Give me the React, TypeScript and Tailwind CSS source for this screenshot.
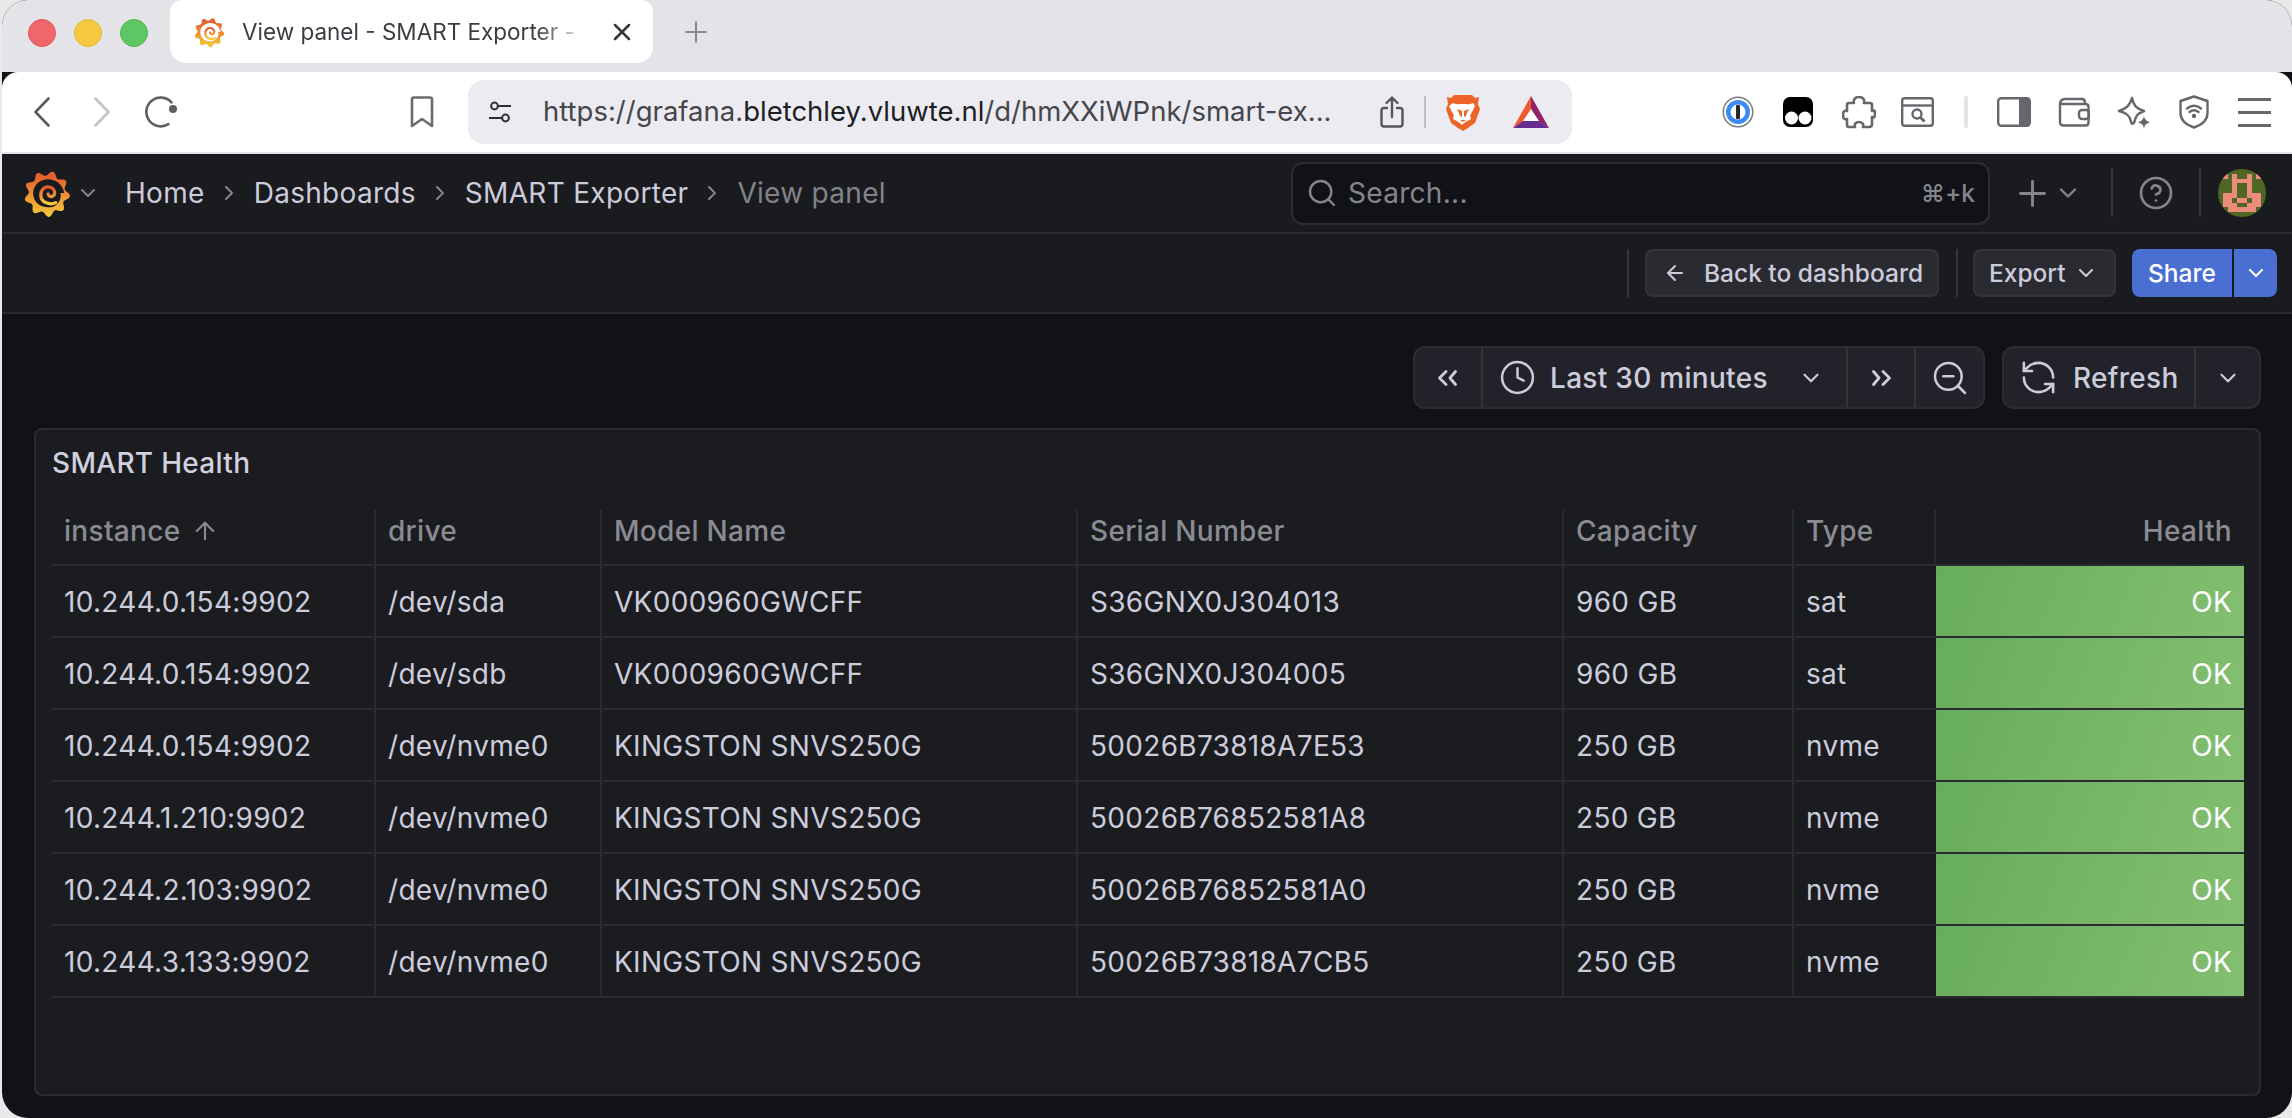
import { ArrowLeft, ArrowUp, ChevronDown, ChevronRight, CircleHelp, Clock, Plus, RefreshCcw, Search, X, ZoomOut } from "lucide-react";

const rows = [
  ["10.244.0.154:9902", "/dev/sda", "VK000960GWCFF", "S36GNX0J304013", "960 GB", "sat"],
  ["10.244.0.154:9902", "/dev/sdb", "VK000960GWCFF", "S36GNX0J304005", "960 GB", "sat"],
  ["10.244.0.154:9902", "/dev/nvme0", "KINGSTON SNVS250G", "50026B73818A7E53", "250 GB", "nvme"],
  ["10.244.1.210:9902", "/dev/nvme0", "KINGSTON SNVS250G", "50026B76852581A8", "250 GB", "nvme"],
  ["10.244.2.103:9902", "/dev/nvme0", "KINGSTON SNVS250G", "50026B76852581A0", "250 GB", "nvme"],
  ["10.244.3.133:9902", "/dev/nvme0", "KINGSTON SNVS250G", "50026B73818A7CB5", "250 GB", "nvme"],
];

const headers = ["drive", "Model Name", "Serial Number", "Capacity", "Type"];

const gridCols = "grid grid-cols-[322px_226px_476px_486px_230px_142px_310px]";

function gearPath(cx: number, cy: number, outer: number, inner: number, teeth: number) {
  let d = "";
  const steps = teeth * 12;
  for (let i = 0; i <= steps; i++) {
    const a = (i / steps) * Math.PI * 2 - Math.PI / 2 + 0.1;
    const wave = (Math.cos(a * teeth - 0.8) + 1) / 2;
    const r = inner + (outer - inner) * Math.pow(wave, 1.1);
    d += `${i === 0 ? "M" : "L"}${(cx + r * Math.cos(a)).toFixed(2)} ${(cy + r * Math.sin(a)).toFixed(2)}`;
  }
  return d + "Z";
}

function GrafanaLogo({ id, bg, className }: { id: string; bg: string; className: string }) {
  return (
    <svg viewBox="0 0 48 48" className={className}>
      <defs>
        <linearGradient id={id} x1="0" y1="0" x2="0" y2="1">
          <stop offset="0.1" stopColor="#e4602f" />
          <stop offset="1" stopColor="#f7cb3b" />
        </linearGradient>
      </defs>
      <path d={gearPath(23, 25, 24, 19, 9)} fill={`url(#${id})`} />
      <path d="M41 24 C39 13 29 8 21 10 C11 12 7 21 9 28 C11 37 21 41 30 38 C36 35 38 29 37 24 Z" fill={bg} />
      <path d="M32 34 C26 37 17 34 16.500 27 C16 20 21 16.500 26.500 18 C31 19.500 32 24 30 26.500 C28 28.500 25 28 24 25" fill="none" stroke={`url(#${id})`} strokeWidth="3.400" strokeLinecap="round" />
    </svg>
  );
}

function Avatar() {
  const pixels = [
    [1, 1], [3, 1], [6, 1], [8, 1],
    [3, 2], [4, 2], [5, 2], [6, 2],
    [3, 3], [6, 3],
    [3, 4], [6, 4],
    [1, 5], [2, 5], [3, 5], [6, 5], [7, 5], [8, 5],
    [1, 6], [2, 6], [4, 6], [5, 6], [7, 6], [8, 6],
    [1, 7], [2, 7], [3, 7], [6, 7], [7, 7], [8, 7],
    [2, 8], [3, 8], [4, 8], [5, 8], [6, 8], [7, 8],
  ];
  return (
    <svg viewBox="0 0 10 10" className="w-[48px] h-[48px] rounded-full shrink-0" shapeRendering="crispEdges">
      <rect width="10" height="10" fill="#4f6722" />
      {pixels.map(([x, y]) => (
        <rect key={`${x}-${y}`} x={x} y={y} width="1" height="1" fill="#ec8c7c" />
      ))}
    </svg>
  );
}

function Divider({ h, ml, color }: { h: string; ml: string; color: string }) {
  return <div className={`w-[2px] ${h} ${ml} ${color} shrink-0`} />;
}

function DoubleChevron({ flip }: { flip?: boolean }) {
  return (
    <svg viewBox="0 0 22 16" className={flip ? "w-[22px] h-[16px] -scale-x-100" : "w-[22px] h-[16px]"} fill="none" stroke="#ccccdc" strokeWidth="2.8" strokeLinecap="round" strokeLinejoin="round">
      <path d="M9 1.500 2.500 8 9 14.500M18.500 1.500 13 8l5.500 6.500" />
    </svg>
  );
}

function BrowserTop() {
  return (
    <div className="flex items-start h-[72px] bg-[#e3e3e8]">
      <div className="flex items-center h-[66px] ml-[26px] gap-[18px]">
        <span className="block w-[28px] h-[28px] rounded-full bg-[#f1666a] border border-[#e0555a]" />
        <span className="block w-[28px] h-[28px] rounded-full bg-[#f5c93f] border border-[#e2b52f]" />
        <span className="block w-[28px] h-[28px] rounded-full bg-[#5fc664] border border-[#4bb651]" />
      </div>
      <div className="flex items-center ml-[22px] w-[483px] h-[63px] bg-white rounded-b-[16px] rounded-t-[12px]">
        <GrafanaLogo id="fav" bg="#ffffff" className="w-[30px] h-[32px] ml-[25px] shrink-0" />
        <span className="ml-[17px] w-[350px] whitespace-nowrap overflow-hidden text-[22.5px] text-[#3c3d43] [mask-image:linear-gradient(90deg,#000_84%,transparent_99%)]">
          View panel - SMART Exporter -
        </span>
        <X className="w-[28px] h-[28px] ml-[16px] text-[#37383d] shrink-0" strokeWidth={2.2} />
      </div>
      <Plus className="w-[34px] h-[34px] ml-[26px] mt-[15px] text-[#8a8b90]" strokeWidth={1.5} />
    </div>
  );
}

function BrowserToolbar() {
  return (
    <div className="flex items-center h-[80px] bg-white rounded-t-[16px] text-[#5f6065] shrink-0">
      <svg viewBox="0 0 16 30" className="w-[16px] h-[30px] ml-[32px]" fill="none" stroke="#5c5d62" strokeWidth="2.6" strokeLinecap="round" strokeLinejoin="round">
        <path d="M14.5 1.5 1.5 15l13 13.5" />
      </svg>
      <svg viewBox="0 0 16 30" className="w-[16px] h-[30px] ml-[44px]" fill="none" stroke="#c3c3c6" strokeWidth="2.6" strokeLinecap="round" strokeLinejoin="round">
        <path d="M1.5 1.5 14.5 15l-13 13.5" />
      </svg>
      <svg viewBox="0 0 33 32" className="w-[33px] h-[32px] ml-[35px]">
        <path d="M25 27 A14.4 14.4 0 1 1 25 5" transform="rotate(8 16 16)" fill="none" stroke="#5f6065" strokeWidth="2.6" strokeLinecap="round" />
        <circle cx="28" cy="13" r="4" fill="#5f6065" />
      </svg>
      <svg viewBox="0 0 24 32" className="w-[24px] h-[32px] ml-[232px]" fill="none" stroke="#6a6b70" strokeWidth="2.6" strokeLinejoin="round">
        <path d="M2 3.5q0-2 2-2h16q2 0 2 2V30l-10-7L2 30z" />
      </svg>
      <div className="flex items-center ml-[34px] w-[1104px] h-[64px] rounded-[16px] bg-[#ecebf1] shrink-0">
        <svg viewBox="0 0 24 24" className="w-[24px] h-[24px] ml-[20px] shrink-0" fill="none" stroke="#2f3035" strokeWidth="2">
          <circle cx="6.5" cy="6" r="3.4" />
          <path d="M10 6h13M1 18h13" />
          <circle cx="17.5" cy="18" r="3.4" />
        </svg>
        <span className="ml-[31px] w-[796px] text-[27.5px] whitespace-nowrap text-[#45464b] shrink-0">
          https://grafana.<span className="text-[#1d1e22]">bletchley.vluwte.nl</span>/d/hmXXiWPnk/smart-ex...
        </span>
        <svg viewBox="0 0 24 32" className="w-[24px] h-[32px] ml-[41px] shrink-0" fill="none" stroke="#55565b" strokeWidth="2.4" strokeLinecap="round" strokeLinejoin="round">
          <path d="M12 21V2M6.5 7 12 1.5 17.500 7M7 12H4q-2.500 0-2.500 2.500V28q0 2.500 2.500 2.500h16q2.500 0 2.500-2.500V14.500Q22.500 12 20 12h-3" />
        </svg>
        <div className="w-[2px] h-[32px] ml-[20px] bg-[#bfbfc4] shrink-0" />
        <svg viewBox="0 0 34 37" className="w-[34px] h-[37px] ml-[20px] shrink-0">
          <path d="M8 1h18l3 3 4-1-1 7 2 5-5 14-7 5-5 3-5-3-7-5L0 15l2-5-1-7 4 1z" fill="#ec6427" />
          <path d="M7 9q5 2 7 1h6q3 1 7-1l2 3-4 8-1 1 1 4-7 4-2 2-2-2-7-4 1-4-1-1-4-8z" fill="#ffffff" />
          <path d="M11 15l5 2v6l-2-1-1-3zM23 15l-5 2v6l2-1 1-3zM14 26h6l-3 2z" fill="#ec6427" />
        </svg>
        <svg viewBox="0 0 36 32" className="w-[36px] h-[32px] ml-[33px] shrink-0">
          <path d="M18 0 L36 32 L24 24 L18 13 Z" fill="#8f2468" />
          <path d="M18 0 L18 13 L12 24 L0 32 Z" fill="#ec5a2e" />
          <path d="M0 32 L36 32 L26 25 L10 25 Z" fill="#662d91" />
          <path d="M18 13 L26 25 L10 25 Z" fill="#ffffff" />
        </svg>
      </div>
      <svg viewBox="0 0 32 32" className="w-[32px] h-[32px] ml-[150px] shrink-0">
        <circle cx="16" cy="16" r="15.500" fill="#77787c" />
        <circle cx="16" cy="16" r="14" fill="#ffffff" />
        <circle cx="16" cy="16" r="12" fill="#3b8bf2" />
        <circle cx="16" cy="16" r="7.500" fill="#ffffff" />
        <rect x="14" y="9" width="4" height="14" rx="1" fill="#26272b" />
      </svg>
      <svg viewBox="0 0 30 30" className="w-[30px] h-[30px] ml-[29px] shrink-0">
        <rect width="30" height="30" rx="7" fill="#000000" />
        <circle cx="8.500" cy="21" r="6.500" fill="#ffffff" />
        <circle cx="22" cy="21" r="6.500" fill="#ffffff" />
      </svg>
      <svg viewBox="0 0 34 33" className="w-[34px] h-[33px] ml-[29px] shrink-0" fill="none" stroke="#66676c" strokeWidth="2.6" strokeLinejoin="round">
        <path d="M12 7c-1-3 1-6 5-6s6 3 5 6h6q2 0 2 2v6c3-1 3 0 3 3s-1 4-3 3v7q0 3-3 3h-6c1-3-1-5-4-5s-5 2-4 5H7q-2 0-2-2v-6c-3 1-4-1-4-4s1-5 4-4V9q0-2 2-2z" />
      </svg>
      <svg viewBox="0 0 33 30" className="w-[33px] h-[30px] ml-[25px] shrink-0" fill="none" stroke="#66676c" strokeWidth="2.4">
        <rect x="1.200" y="1.200" width="30.600" height="27.600" rx="2.500" />
        <path d="M1.500 8.500h30" />
        <circle cx="16" cy="17" r="4.500" />
        <path d="m19.500 20.500 4 4" strokeWidth="2.800" />
      </svg>
      <div className="w-[4px] h-[32px] ml-[30px] rounded-sm bg-[#e3e3e8] shrink-0" />
      <svg viewBox="0 0 34 30" className="w-[34px] h-[30px] ml-[29px] shrink-0">
        <rect x="1.200" y="1.200" width="31.600" height="27.600" rx="3" fill="#ffffff" stroke="#66676c" strokeWidth="2.400" />
        <path d="M22 1h8q3 0 3 3v22q0 3-3 3h-8z" fill="#66676c" />
      </svg>
      <svg viewBox="0 0 32 30" className="w-[32px] h-[30px] ml-[27px] shrink-0" fill="none" stroke="#66676c" strokeWidth="2.400" strokeLinejoin="round">
        <path d="M2 7q0-5 5-5h17q3 0 3 4M2 7v18q0 3.500 3.500 3.500h22q3 0 3-3V10q0-3-3-3H2" />
        <rect x="21" y="13" width="10" height="9" rx="3" />
      </svg>
      <svg viewBox="0 0 34 33" className="w-[34px] h-[33px] ml-[27px] shrink-0">
        <path d="M15 2c1.500 7 3.500 10 12 13-6 2.500-8 4-9.500 10.500-1 3-3 3-3.500 0C13 20 10 17 2 15c8-2.500 11-6 13-13z" fill="none" stroke="#66676c" strokeWidth="2.500" strokeLinejoin="round" />
        <path d="M27 20c.6 3 1.500 4.200 6 6.500-4.500 1-5.400 2.500-6 6.500-.6-4-1.500-5.500-6-6.500 4.500-2.300 5.400-3.500 6-6.500z" fill="#66676c" />
      </svg>
      <svg viewBox="0 0 30 34" className="w-[30px] h-[34px] ml-[28px] shrink-0" fill="none" stroke="#66676c" strokeWidth="2.400" strokeLinejoin="round" strokeLinecap="round">
        <path d="M15 1.500 28.500 6v12c0 7-6 12-13.500 14.500C7.500 30 1.500 25 1.500 18V6z" />
        <path d="M8 13.500q7-5.500 14 0M10.500 17q4.500-3.500 9 0" />
        <circle cx="15" cy="21" r="1" fill="#66676c" />
      </svg>
      <div className="flex flex-col gap-[10px] ml-[29px] w-[33px] shrink-0">
        <div className="h-[3px] bg-[#66676c]" />
        <div className="h-[3px] bg-[#66676c]" />
        <div className="h-[3px] bg-[#66676c]" />
      </div>
    </div>
  );
}

function TopNav() {
  const crumbs = ["Home", "Dashboards", "SMART Exporter"];
  return (
    <div className="flex items-center h-[80px] bg-[#1a1b1f] border-b-2 border-[#2a2b30] shrink-0">
      <GrafanaLogo id="nav" bg="#1a1b1f" className="w-[46px] h-[48px] ml-[23px] shrink-0" />
      <ChevronDown className="w-[24px] h-[24px] ml-[5px] text-[#85868c] shrink-0" strokeWidth={2} />
      <div className="flex items-center w-[1166px] ml-[25px] text-[28px] tracking-[0.3px] text-[#ccccdc] whitespace-nowrap shrink-0">
        {crumbs.map((c) => (
          <span key={c} className="flex items-center">
            {c}
            <ChevronRight className="w-[24px] h-[24px] ml-[12px] mr-[13px] text-[#85868c]" strokeWidth={2} />
          </span>
        ))}
        <span className="text-[#82838a]">View panel</span>
      </div>
      <div className="flex items-center w-[699px] h-[63px] rounded-[12px] bg-[#111217] border-2 border-[#2c2d32] text-[#85868c] shrink-0">
        <Search className="w-[32px] h-[32px] ml-[13px] shrink-0" strokeWidth={1.8} />
        <span className="ml-[10px] text-[28px] tracking-[0.3px]">Search...</span>
        <span className="ml-auto mr-[13px] text-[24.5px] font-medium">⌘+k</span>
      </div>
      <Plus className="w-[41px] h-[41px] ml-[22px] text-[#85868c] shrink-0" strokeWidth={1.7} />
      <ChevronDown className="w-[28px] h-[28px] ml-[1px] text-[#85868c] shrink-0" strokeWidth={2} />
      <Divider h="h-[48px]" ml="ml-[29px]" color="bg-[#36373c]" />
      <CircleHelp className="w-[36px] h-[36px] ml-[25px] text-[#85868c] shrink-0" strokeWidth={1.8} />
      <Divider h="h-[48px]" ml="ml-[25px]" color="bg-[#36373c]" />
      <div className="ml-[17px] shrink-0 flex">
        <Avatar />
      </div>
    </div>
  );
}

function ActionBar() {
  return (
    <div className="flex items-center justify-end h-[80px] bg-[#1a1b1f] border-b-2 border-[#2a2b30] shrink-0 pr-[15px] text-[24.5px] font-medium text-[#ccccdc]">
      <Divider h="h-[48px]" ml="ml-0" color="bg-[#36373c]" />
      <div className="flex items-center w-[294px] h-[48px] ml-[16px] rounded-[8px] bg-[#2a2b31] border-2 border-[#33343a] shrink-0">
        <ArrowLeft className="w-[24px] h-[24px] ml-[16px] shrink-0" strokeWidth={2} />
        <span className="ml-[17px] whitespace-nowrap">Back to dashboard</span>
      </div>
      <Divider h="h-[48px]" ml="ml-[17px]" color="bg-[#36373c]" />
      <div className="flex items-center w-[143px] h-[48px] ml-[15px] rounded-[8px] bg-[#2a2b31] border-2 border-[#33343a] shrink-0">
        <span className="ml-[14px]">Export</span>
        <ChevronDown className="w-[24px] h-[24px] ml-[8px] shrink-0" strokeWidth={2} />
      </div>
      <div className="flex items-center justify-center w-[100px] h-[48px] ml-[16px] rounded-l-[8px] bg-[#4a6fd2] text-white shrink-0">Share</div>
      <div className="flex items-center justify-center w-[43px] h-[48px] ml-[2px] rounded-r-[8px] bg-[#4a6fd2] text-white shrink-0">
        <ChevronDown className="w-[24px] h-[24px]" strokeWidth={2.2} />
      </div>
    </div>
  );
}

function TimeControls() {
  const cell = "flex items-center h-full shrink-0";
  return (
    <div className="flex justify-end gap-[17px] mt-[32px] mr-[31px] text-[28px] tracking-[0.3px] font-medium text-[#ccccdc]">
      <div className="flex items-center h-[63px] w-[572px] rounded-[12px] bg-[#22232a] border-2 border-[#2c2d33]">
        <div className={`${cell} w-[66px] justify-center`}>
          <DoubleChevron />
        </div>
        <div className={`${cell} w-[365px] border-l-2 border-[#33343a]`}>
          <Clock className="w-[37px] h-[37px] ml-[16px] shrink-0" strokeWidth={1.6} />
          <span className="ml-[14px] whitespace-nowrap">Last 30 minutes</span>
          <ChevronDown className="w-[26px] h-[26px] ml-[30px] shrink-0" strokeWidth={2} />
        </div>
        <div className={`${cell} w-[68px] justify-center border-l-2 border-[#33343a]`}>
          <DoubleChevron flip />
        </div>
        <div className={`${cell} flex-1 justify-center border-l-2 border-[#33343a]`}>
          <ZoomOut className="w-[40px] h-[40px]" strokeWidth={1.5} />
        </div>
      </div>
      <div className="flex items-center h-[63px] w-[259px] rounded-[12px] bg-[#22232a] border-2 border-[#2c2d33]">
        <div className={`${cell} w-[190px]`}>
          <RefreshCcw className="w-[39px] h-[39px] ml-[15px] shrink-0" strokeWidth={1.6} />
          <span className="ml-[15px]">Refresh</span>
        </div>
        <div className={`${cell} flex-1 justify-center border-l-2 border-[#33343a]`}>
          <ChevronDown className="w-[26px] h-[26px]" strokeWidth={2} />
        </div>
      </div>
    </div>
  );
}

function HealthPanel() {
  return (
    <div className="flex flex-col ml-[32px] mt-[19px] w-[2227px] h-[668px] rounded-[8px] bg-[#1b1c20] border-2 border-[#2a2b30] pl-[16px] shrink-0">
      <div className="flex items-center h-[60px] mt-[3px] text-[28px] tracking-[0.3px] font-medium text-[#d0d0de] shrink-0">SMART Health</div>
      <div className="mt-[17px] w-[2192px] text-[28px] tracking-[0.3px] text-[#ccccdc]">
        <div className={`${gridCols} h-[56px] border-b-2 border-[#2a2b30] font-medium text-[#8a8b93]`}>
          <div className="flex items-center pl-[12px] pb-[14px] gap-[11px]">
            instance
            <ArrowUp className="w-[28px] h-[28px]" strokeWidth={1.8} />
          </div>
          {headers.map((h) => (
            <div key={h} className="flex items-center pl-[12px] pb-[14px] border-l-2 border-[#2a2b30]">
              {h}
            </div>
          ))}
          <div className="flex items-center justify-end pr-[12px] pb-[14px] border-l-2 border-[#2a2b30]">Health</div>
        </div>
        {rows.map((row, i) => (
          <div key={i} className={`${gridCols} h-[72px] border-b-2 border-[#2a2b30]`}>
            {row.map((v, j) => (
              <div key={j} className={j === 0 ? "flex items-center pl-[12px] pt-[2px]" : "flex items-center pl-[12px] pt-[2px] border-l-2 border-[#2a2b30]"}>
                {v}
              </div>
            ))}
            <div className="flex items-center justify-end pr-[12px] pt-[2px] ml-[2px] text-white bg-[linear-gradient(110deg,#67ad5a,#84be71)]">OK</div>
          </div>
        ))}
      </div>
    </div>
  );
}

export default function App() {
  return (
    <div className="w-[2292px] h-[1118px] bg-[#e9e9ea] pl-[2px] overflow-hidden font-['Inter',sans-serif]">
      <div className="flex flex-col w-[2290px] h-[1118px] bg-[#111217] rounded-[26px] overflow-hidden">
        <BrowserTop />
        <BrowserToolbar />
        <div className="h-[2px] bg-[#e3e3e8] shrink-0" />
        <TopNav />
        <ActionBar />
        <TimeControls />
        <HealthPanel />
      </div>
    </div>
  );
}
